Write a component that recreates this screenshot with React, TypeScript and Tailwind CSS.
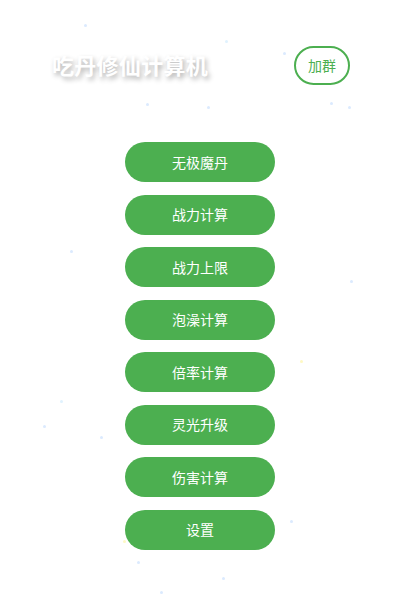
const items = ['无极魔丹', '战力计算', '战力上限', '泡澡计算', '倍率计算', '灵光升级', '伤害计算', '设置'];

// faint particle dots scattered over the background
const dots = [
  [84, 24, '#dbeafe'], [225, 40, '#e0f2fe'], [330, 55, '#fef9c3'], [283, 52, '#dbeafe'],
  [146, 103, '#dbeafe'], [207, 106, '#dbeafe'], [330, 102, '#dbeafe'], [348, 106, '#dbeafe'],
  [100, 436, '#dbeafe'], [43, 425, '#dbeafe'], [128, 520, '#dbeafe'], [123, 540, '#fef9c3'],
  [290, 520, '#dbeafe'], [160, 591, '#dbeafe'], [137, 561, '#dbeafe'], [222, 577, '#dbeafe'],
  [60, 400, '#e0f2fe'], [350, 280, '#dbeafe'], [300, 360, '#fef9c3'], [70, 250, '#dbeafe'],
];

export default function App() {
  return (
    <div
      className="relative w-[400px] h-[600px] overflow-hidden bg-white"
      style={{ fontFamily: '"Noto Sans CJK SC", "Noto Sans", sans-serif' }}
    >
      {dots.map(([x, y, c], i) => (
        <span
          key={i}
          className="absolute w-[3px] h-[3px] rounded-full"
          style={{ left: x as number, top: y as number, background: c as string }}
        />
      ))}

      <div className="relative flex flex-col">
        {/* Header */}
        <div className="flex items-center justify-between pl-[52px] pr-[50px] pt-[46px] h-[85px]">
          <h1 className="text-[22px] font-bold text-white leading-none tracking-[0.3px] -mt-[4px] [text-shadow:2px_3px_5px_rgba(0,0,0,0.3)]">
            吃丹修仙计算机
          </h1>
          <button className="w-[56px] h-[39px] rounded-full border-2 border-[#4caf50] text-[#4caf50] text-[14px] flex items-center justify-center bg-white">
            加群
          </button>
        </div>

        {/* Menu */}
        <div className="flex flex-col items-center gap-[12.5px] mt-[57px]">
          {items.map((t) => (
            <button
              key={t}
              className="w-[150px] h-[40px] rounded-full bg-[#4caf50] text-white text-[14px] flex items-center justify-center"
            >
              {t}
            </button>
          ))}
        </div>
      </div>
    </div>
  );
}
